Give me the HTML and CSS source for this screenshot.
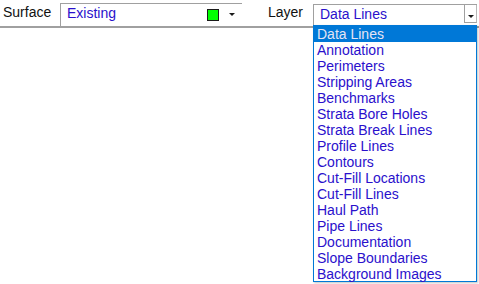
FILE: index.html
```html
<!DOCTYPE html>
<html>
<head>
<meta charset="utf-8">
<link rel="stylesheet" href="styles.css">
</head>
<body>
<div class="toolbar">
  <span class="label label-surface">Surface</span>
  <div class="combo combo-surface">
    <span class="value">Existing</span>
    <span class="swatch"></span>
    <span class="arrow"></span>
  </div>
  <span class="label label-layer">Layer</span>
  <div class="combo combo-layer">
    <span class="value">Data Lines</span>
    <span class="button"><span class="arrow"></span></span>
  </div>
</div>
<ul class="dropdown">
  <li class="selected">Data Lines</li>
  <li>Annotation</li>
  <li>Perimeters</li>
  <li>Stripping Areas</li>
  <li>Benchmarks</li>
  <li>Strata Bore Holes</li>
  <li>Strata Break Lines</li>
  <li>Profile Lines</li>
  <li>Contours</li>
  <li>Cut-Fill Locations</li>
  <li>Cut-Fill Lines</li>
  <li>Haul Path</li>
  <li>Pipe Lines</li>
  <li>Documentation</li>
  <li>Slope Boundaries</li>
  <li>Background Images</li>
</ul>
</body>
</html>
```
FILE: styles.css
```css
html, body {
  margin: 0;
  padding: 0;
  background: #ffffff;
  font-family: "Liberation Sans", Arial, sans-serif;
  font-size: 14px;
}

.toolbar {
  display: flex;
  height: 26px;
  border-bottom: 2px solid #a0a0a0;
  padding-left: 3px;
}

.label {
  color: #111111;
  line-height: 16px;
  padding-top: 4px;
}

.label-surface {
  width: 57px;
}

.label-layer {
  margin-left: 26px;
  width: 45px;
}

.combo {
  display: flex;
  align-items: flex-start;
  border-top: 1px solid #a0a0a0;
  border-left: 1px solid #a0a0a0;
  height: 22px;
  box-sizing: border-box;
}

.combo-surface {
  margin-top: 3px;
  width: 182px;
  height: 23px;
}

.combo-layer {
  margin-top: 4px;
  width: 164px;
}

.value {
  color: #2a10cc;
  line-height: 16px;
  padding-left: 6px;
  padding-top: 1px;
}

.combo-layer .value {
  flex: 1;
}

.swatch {
  margin-left: auto;
  margin-top: 5px;
  width: 10px;
  height: 10px;
  background: #00ff00;
  border: 1px solid #1a1a1a;
}

.arrow {
  width: 0;
  height: 0;
  border-left: 3px solid transparent;
  border-right: 3px solid transparent;
  border-top: 3px solid #1a1a1a;
}

.combo-surface .arrow {
  margin-left: 10px;
  margin-right: 7px;
  margin-top: 9px;
}

.button {
  display: flex;
  justify-content: center;
  width: 13px;
  height: 18px;
  box-sizing: border-box;
  border-left: 1px solid #a0a0a0;
  border-bottom: 1px solid #a0a0a0;
  border-right: 1px solid #b8b8b8;
}

.button .arrow {
  margin-top: 10px;
}

.dropdown {
  position: absolute;
  left: 313px;
  top: 25px;
  width: 164px;
  height: 257px;
  box-sizing: border-box;
  margin: 0;
  padding: 0;
  list-style: none;
  background: #ffffff;
  border: 1px solid #0078d7;
  box-shadow: 1px 1px 2px rgba(0, 0, 0, 0.25);
}

.dropdown li {
  height: 16px;
  line-height: 16px;
  padding-left: 3px;
  color: #2a10cc;
  white-space: nowrap;
}

.dropdown li.selected {
  background: #0078d7;
  color: #e4e4f4;
}
```
